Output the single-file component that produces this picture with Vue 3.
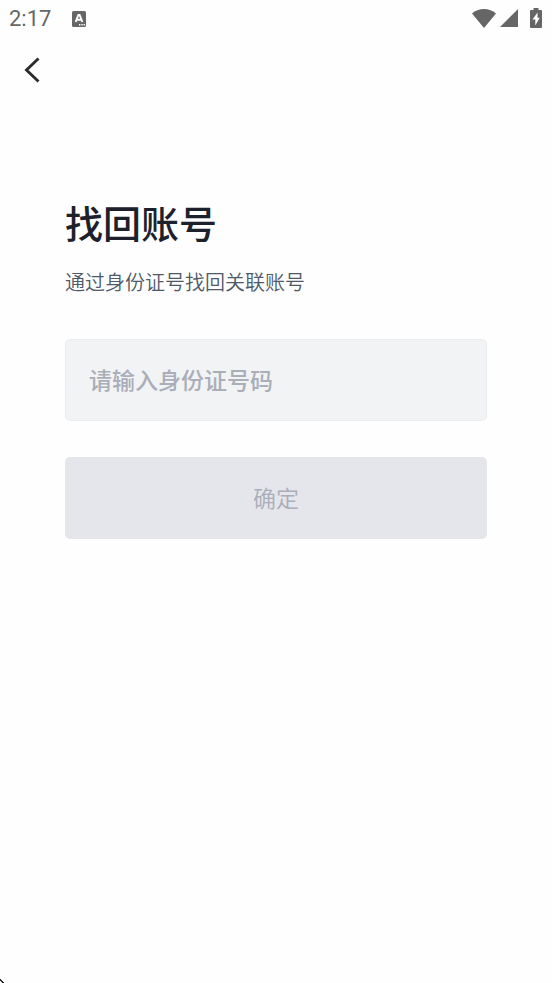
<script setup>
import { ref } from 'vue'

const idNumber = ref('')
</script>

<template>
  <div class="screen">
    <div class="status-bar">
      <span class="clock">2:17</span>
      <svg class="notice" viewBox="0 0 14 16" aria-hidden="true">
        <rect width="14" height="16" rx="1.5" fill="#666" />
        <path d="M3.600 11 6.400 4h1.200l2.800 7M5 8.700h4.200" fill="none" stroke="#fff" stroke-width="1.900" />
        <path d="M7 13.100h1.400v1.400H7zM9.300 13.100h1.400v1.400H9.300zM11.600 13.100H13v1.400h-1.400z" fill="#fff" />
      </svg>
      <div class="system">
        <svg class="wifi" viewBox="0 0 24 19" aria-hidden="true">
          <path d="M0 4.500C3.200 1.600 7.300 0 12 0s8.800 1.600 12 4.500L12 19z" fill="#666" />
        </svg>
        <svg class="signal" viewBox="0 0 18 18" aria-hidden="true">
          <path d="M18 0v18H0z" fill="#666" />
        </svg>
        <svg class="battery" viewBox="0 0 12 20" aria-hidden="true">
          <path d="M3.500 0h5v2H11a1 1 0 0 1 1 1v16a1 1 0 0 1-1 1H1a1 1 0 0 1-1-1V3a1 1 0 0 1 1-1h2.500z" fill="#666" />
          <path d="M7.500 4.500 2.500 11.500h2.800v6L9.700 9.800H7.500z" fill="#fff" />
        </svg>
      </div>
    </div>

    <header class="nav">
      <button class="back" type="button" aria-label="返回">
        <svg viewBox="0 0 16 26" aria-hidden="true">
          <path d="M14.500 1.500 2.500 13l12 11.500" fill="none" stroke="#2b2b2b" stroke-width="2.900" />
        </svg>
      </button>
    </header>

    <main class="content">
      <h1>找回账号</h1>
      <p>通过身份证号找回关联账号</p>
      <form @submit.prevent>
        <input v-model="idNumber" type="text" placeholder="请输入身份证号码" aria-label="请输入身份证号码" />
        <button class="confirm" type="submit" :disabled="!idNumber">确定</button>
      </form>
    </main>

    <svg class="corner" viewBox="0 0 4 4" aria-hidden="true">
      <path d="M0 0h1v1h1v1h1v1h1v1H2V3H1V2H0z" fill="#222" />
    </svg>
  </div>
</template>

<style>
body {
  margin: 0;
  background: #fefefe;
}
</style>

<style scoped>
.screen {
  position: relative;
  min-height: 100vh;
  font-family: "Noto Sans CJK SC", sans-serif;
}

.status-bar {
  display: flex;
  align-items: center;
  height: 38px;
  padding: 0 10px 0 9px;
}

.clock {
  color: #666;
  font: 400 22px/38px Roboto, sans-serif;
}

.notice {
  width: 14px;
  height: 16px;
  margin-left: 21px;
}

.system {
  display: flex;
  align-items: center;
  margin-left: auto;
  padding-bottom: 2px;
}

.wifi {
  width: 24px;
  height: 19px;
}

.signal {
  width: 18px;
  height: 18px;
  margin-left: 4px;
}

.battery {
  width: 12px;
  height: 20px;
  margin-left: 12px;
}

.nav {
  display: flex;
  align-items: center;
  height: 64px;
  padding: 0 16px;
}

.back {
  display: flex;
  padding: 8px;
  border: 0;
  background: none;
}

.back svg {
  width: 16px;
  height: 26px;
}

.content {
  padding: 92px 65px 0;
}

h1 {
  margin: 0;
  color: #1d212b;
  font-size: 38px;
  font-weight: 500;
  line-height: 56px;
}

p {
  margin: 17px 0 0;
  color: #4e5969;
  font-size: 20px;
  font-weight: 350;
  line-height: 30px;
}

form {
  display: flex;
  flex-direction: column;
  gap: 36px;
  margin-top: 42px;
}

input,
.confirm {
  box-sizing: border-box;
  width: 100%;
  height: 82px;
  border-radius: 5px;
  font-family: inherit;
}

input {
  padding: 0 23px 2px;
  border: 1px solid #eaebee;
  outline: 0;
  background: #f2f3f5;
  color: #1d212b;
  font-size: 23px;
  font-weight: 500;
}

input::placeholder {
  color: #a9aeb8;
  opacity: 1;
}

.confirm {
  padding: 0 0 2px;
  border: 0;
  background: #4080ff;
  color: #fff;
  font-size: 23px;
  font-weight: 350;
}

.confirm:disabled {
  background: #e5e6eb;
  color: #a9aeb8;
}

.corner {
  position: absolute;
  bottom: 0;
  left: 0;
  width: 4px;
  height: 4px;
}
</style>
